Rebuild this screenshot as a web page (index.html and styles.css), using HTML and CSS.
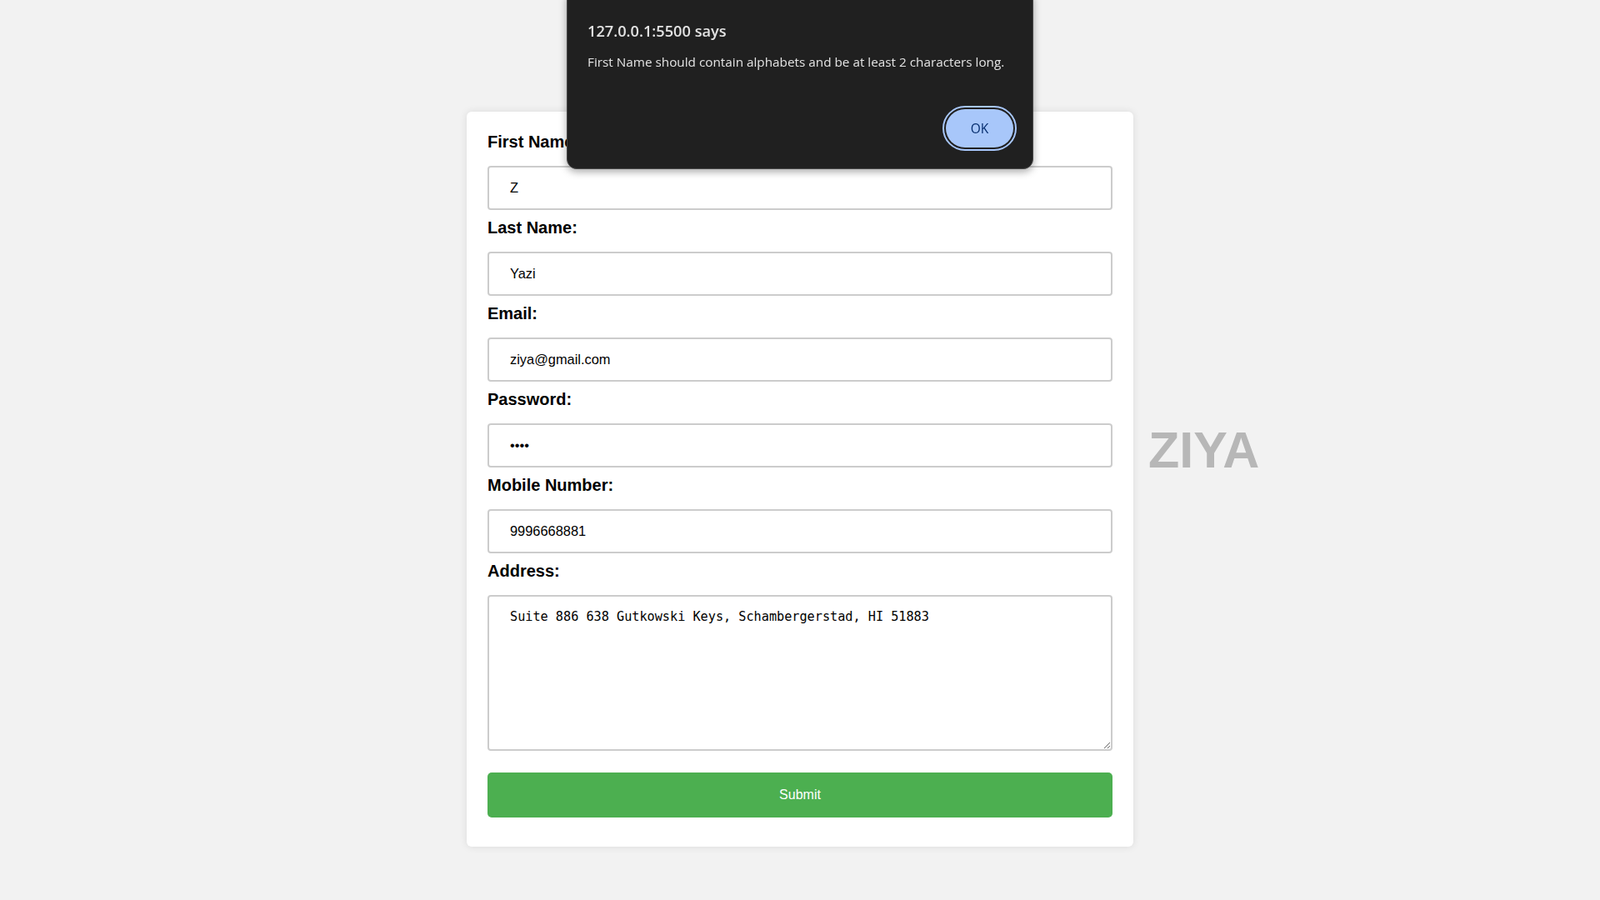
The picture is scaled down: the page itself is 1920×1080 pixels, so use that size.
FILE: index.html
```html
<!DOCTYPE html>
<html lang="en">
<head>
<meta charset="utf-8">
<title>Registration Form</title>
<link rel="stylesheet" href="styles.css">
</head>
<body>
<div class="page">
  <form class="card">
    <label class="field-label" for="fn">First Name:</label>
    <input class="field" id="fn" type="text" value="Z">
    <label class="field-label" for="ln">Last Name:</label>
    <input class="field" id="ln" type="text" value="Yazi">
    <label class="field-label" for="em">Email:</label>
    <input class="field" id="em" type="text" value="ziya@gmail.com">
    <label class="field-label" for="pw">Password:</label>
    <input class="field" id="pw" type="password" value="1234">
    <label class="field-label" for="mb">Mobile Number:</label>
    <input class="field" id="mb" type="text" value="9996668881">
    <label class="field-label" for="ad">Address:</label>
    <textarea class="area" id="ad">Suite 886 638 Gutkowski Keys, Schambergerstad, HI 51883</textarea>
    <button class="submit" type="button">Submit</button>
  </form>
  <div class="brand">ZIYA</div>
</div>

<div class="alert" role="alertdialog">
  <div class="alert-title">127.0.0.1:5500 says</div>
  <div class="alert-msg">First Name should contain alphabets and be at least 2 characters long.</div>
  <div class="alert-actions">
    <button class="alert-ok" type="button">OK</button>
  </div>
</div>
</body>
</html>
```
FILE: styles.css
```css
html, body {
  margin: 0;
  padding: 0;
}
body {
  background: #f2f2f2;
  font-family: "Liberation Sans", Arial, sans-serif;
  color: #000;
}
.page {
  display: grid;
  grid-template-columns: 1fr 800px 1fr;
  height: 1080px;
}
.card {
  grid-column: 2;
  align-self: start;
  margin-top: 134px;
  box-sizing: border-box;
  width: 800px;
  padding: 25px;
  background: #fff;
  border-radius: 6px;
  box-shadow: 0 0 10px rgba(0, 0, 0, 0.1);
}
.field-label {
  display: block;
  font-weight: bold;
  font-size: 20px;
  line-height: 23px;
  margin-bottom: 17px;
}
.field {
  display: block;
  box-sizing: border-box;
  width: 100%;
  height: 53px;
  margin: 0 0 10px 0;
  padding: 0 25px;
  border: 2px solid #cccccc;
  border-radius: 4px;
  font-family: "Liberation Sans", Arial, sans-serif;
  font-size: 16.4px;
  color: #000;
  background: #fff;
  outline: none;
}
.area {
  display: block;
  box-sizing: border-box;
  width: 100%;
  height: 187px;
  margin: 0 0 26px 0;
  padding: 15px 25px;
  border: 2px solid #cccccc;
  border-radius: 4px;
  font-family: "DejaVu Sans Mono", monospace;
  font-size: 15.2px;
  line-height: 18px;
  color: #000;
  background: #fff;
  outline: none;
}
.submit {
  display: block;
  box-sizing: border-box;
  width: 100%;
  height: 54px;
  margin: 0 0 10px 0;
  border: none;
  border-radius: 5px;
  background: #4caf50;
  color: #fff;
  font-family: "Liberation Sans", Arial, sans-serif;
  font-size: 16px;
}
.brand {
  grid-column: 3;
  align-self: center;
  justify-self: start;
  margin-left: 18px;
  font-weight: bold;
  font-size: 61px;
  line-height: 70px;
  color: #b7b7b7;
}
.alert {
  position: fixed;
  left: 680px;
  top: -12px;
  width: 560px;
  box-sizing: border-box;
  padding: 36px 23px 25px 24px;
  background: #202020;
  border: 1px solid #474747;
  border-radius: 12px;
  box-shadow: 0 3px 10px rgba(0, 0, 0, 0.35);
  font-family: "Open Sans", "Noto Sans", sans-serif;
  color: #e3e3e3;
}
.alert-title {
  font-size: 18.2px;
  font-weight: 600;
  line-height: 24px;
}
.alert-msg {
  margin-top: 15px;
  font-size: 15.3px;
  line-height: 20px;
}
.alert-actions {
  display: flex;
  justify-content: flex-end;
  margin-top: 47px;
}
.alert-ok {
  width: 81px;
  height: 46px;
  border: none;
  border-radius: 23px;
  background: #a8c7fa;
  color: #062e6f;
  font-family: "Open Sans", "Noto Sans", sans-serif;
  font-size: 15.5px;
  font-weight: 500;
  outline: 2px solid #a8c7fa;
  outline-offset: 2px;
}
```
